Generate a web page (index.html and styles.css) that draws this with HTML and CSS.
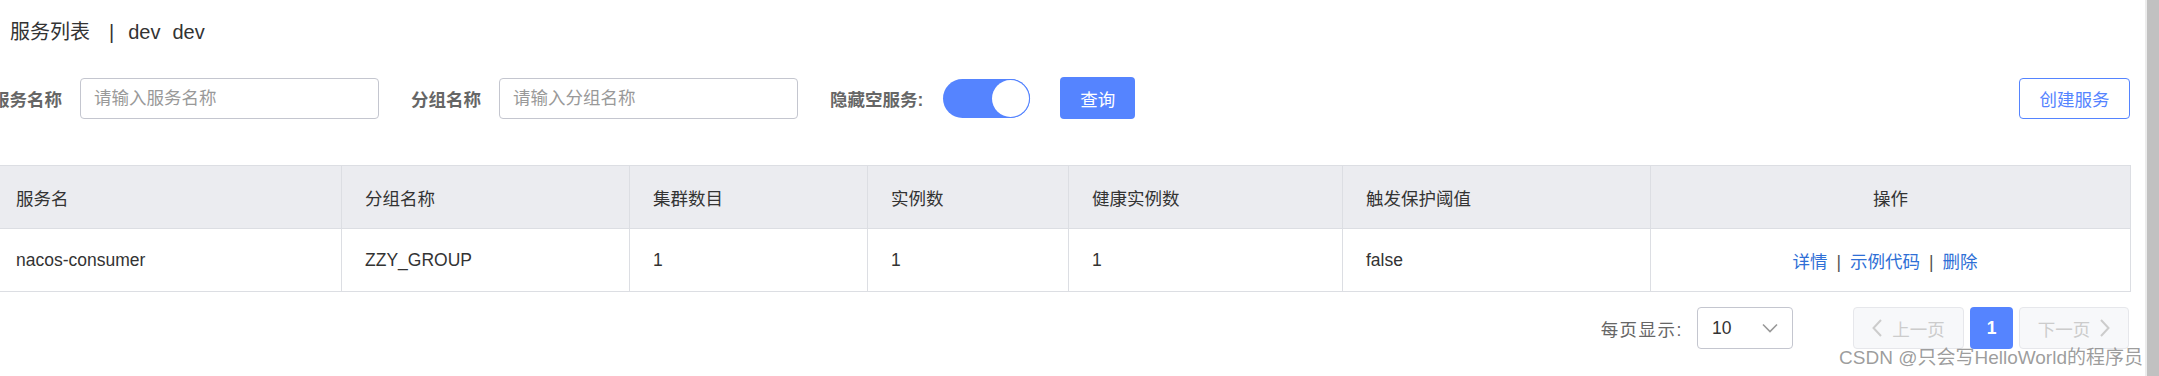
FILE: index.html
```html
<!DOCTYPE html>
<html lang="zh-CN">
<head>
  <meta charset="UTF-8">
  <title>服务列表 – Nacos</title>
  <link rel="stylesheet" href="styles.css">
</head>
<body>
  <div class="window">
    <div class="viewport">
      <div class="page">
        <h1 class="page-title">服务列表<span class="title-sep">|</span><span>dev</span><span class="ns-name">dev</span></h1>

        <div class="search-bar">
          <label class="field-label">服务名称</label>
          <input class="field-input" type="text" placeholder="请输入服务名称">
          <label class="field-label gap">分组名称</label>
          <input class="field-input" type="text" placeholder="请输入分组名称">
          <label class="field-label gap">隐藏空服务:</label>
          <div class="switch on"><span class="knob"></span></div>
          <button class="btn-primary btn-query">查询</button>
          <button class="btn-outline btn-create">创建服务</button>
        </div>

        <table class="service-table">
          <colgroup>
            <col style="width:349px"><col style="width:288px"><col style="width:238px">
            <col style="width:201px"><col style="width:274px"><col style="width:308px"><col style="width:480px">
          </colgroup>
          <thead>
            <tr>
              <th>服务名</th><th>分组名称</th><th>集群数目</th><th>实例数</th>
              <th>健康实例数</th><th>触发保护阈值</th><th class="center">操作</th>
            </tr>
          </thead>
          <tbody>
            <tr>
              <td>nacos-consumer</td><td>ZZY_GROUP</td><td>1</td><td>1</td><td>1</td><td>false</td>
              <td class="center ops">
                <a href="#">详情</a><span class="op-sep">|</span><a href="#">示例代码</a><span class="op-sep">|</span><a href="#">删除</a>
              </td>
            </tr>
          </tbody>
        </table>

        <div class="pager">
          <span class="pager-label">每页显示:</span>
          <div class="page-size">
            <span>10</span>
            <svg width="16" height="10" viewBox="0 0 16 10"><path d="M1 1.5 L8 8.5 L15 1.5" fill="none" stroke="#999" stroke-width="1.6"/></svg>
          </div>
          <button class="pager-btn prev" disabled>
            <svg width="10" height="18" viewBox="0 0 10 18"><path d="M9 1 L1.5 9 L9 17" fill="none" stroke="#ccc" stroke-width="2"/></svg>
            上一页
          </button>
          <button class="pager-num">1</button>
          <button class="pager-btn next" disabled>
            下一页
            <svg width="10" height="18" viewBox="0 0 10 18"><path d="M1 1 L8.5 9 L1 17" fill="none" stroke="#ccc" stroke-width="2"/></svg>
          </button>
        </div>
      </div>
    </div>
    <div class="scrollbar"></div>
    <div class="watermark">CSDN @只会写HelloWorld的程序员</div>
  </div>
</body>
</html>
```

FILE: styles.css
```css
*{box-sizing:border-box;margin:0;padding:0}
html,body{height:100%;overflow:hidden;background:#fff}
body{font-family:"Liberation Sans","Noto Sans CJK SC",sans-serif;font-size:17.5px;color:#333}

.window{display:flex;height:376px;position:relative}
.viewport{flex:1;overflow:hidden}
.scrollbar{width:14px;border-left:2px solid #ececec;background:#c1c1c1}

/* page is scrolled a little to the right, so left edge sits off screen */
.page{margin-left:-8px;margin-right:15px}

.page-title{
  font-size:20px;font-weight:normal;line-height:24px;color:#333;
  padding:20px 0 0 18px;
}
.title-sep{margin:0 14px 0 19px}
.ns-name{margin-left:12px}

.search-bar{display:flex;align-items:center;margin-top:33px;height:42px}
.field-label{font-weight:bold;color:#666;font-size:17.5px;margin-right:18px;white-space:nowrap}
.field-label.gap{margin-left:32px}
.field-label.gap + .switch{margin-left:2px}
.field-input{
  width:299px;height:41px;padding:0 13px;
  border:1px solid #c4c6cf;border-radius:4px;
  font-family:inherit;font-size:17.5px;color:#333;outline:none;
}
.field-input::placeholder{color:#999}

.switch{
  width:87px;height:39px;border-radius:20px;background:#5584ff;
  position:relative;
}
.switch .knob{
  position:absolute;top:1px;right:1px;width:37px;height:37px;border-radius:50%;
  background:#fff;box-shadow:0 0 0 1px #5584ff;
}

button{font-family:inherit;font-size:17.5px;cursor:pointer}
.btn-primary{
  background:#5584ff;color:#fff;border:none;border-radius:4px;
}
.btn-query{width:75px;height:42px;margin-left:30px}
.btn-outline{
  background:#fff;color:#5584ff;border:1px solid #5584ff;border-radius:4px;
}
.btn-create{width:111px;height:41px;margin-left:auto}

.service-table{
  width:100%;margin-top:46px;border-collapse:collapse;table-layout:fixed;
  border:1px solid #dcdee3;
}
.service-table th,.service-table td{
  height:63px;padding:0 23px;text-align:left;vertical-align:middle;
  border:1px solid #dcdee3;font-size:17.5px;color:#333;white-space:nowrap;
}
.service-table th{background:#ebecf0;font-weight:normal}
.service-table .center{text-align:center}
.service-table td.ops{padding-right:34px}
.ops a{color:#2f6fd6;text-decoration:none}
.op-sep{color:#555;margin:0 9px}

.pager{display:flex;justify-content:flex-end;align-items:center;margin-top:15px;padding-right:1px}
.pager-label{color:#666;margin-right:14px;letter-spacing:1.5px}
.page-size{
  width:96px;height:42px;border:1px solid #c4c6cf;border-radius:4px;
  display:flex;align-items:center;justify-content:space-between;padding:0 14px 0 14px;color:#333;
}
.pager-btn{
  height:42px;border:1px solid #e6e7eb;border-radius:4px;background:#f7f8fa;color:#ccc;
  display:flex;align-items:center;justify-content:center;gap:10px;cursor:not-allowed;
}
.pager-btn.prev{width:111px;margin-left:60px}
.pager-btn.next{width:110px}
.pager-num{
  width:43px;height:42px;margin:0 6px;border:none;border-radius:4px;
  background:#5584ff;color:#fff;font-weight:bold;
}

.watermark{
  position:absolute;right:16px;top:347px;
  font-size:19px;line-height:22px;color:rgba(140,140,140,0.85);
  font-family:"Liberation Sans","Noto Sans CJK SC",sans-serif;pointer-events:none;
}
```
